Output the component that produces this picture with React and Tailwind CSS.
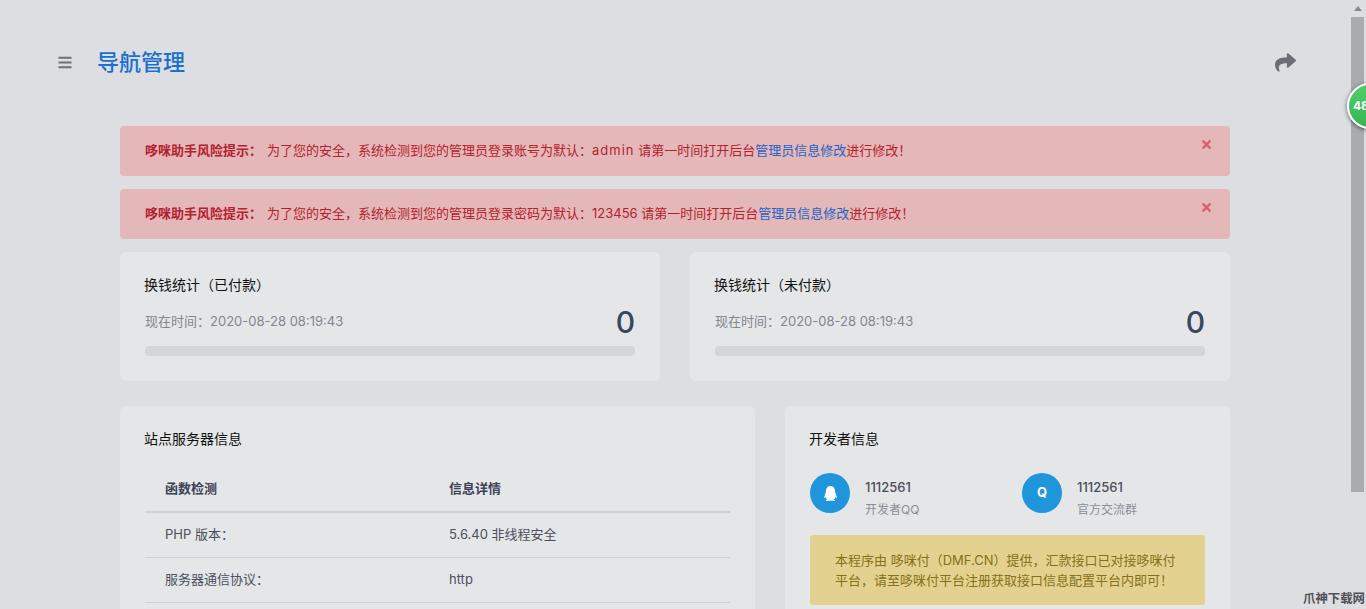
import React from "react";
import { FaBars, FaShare, FaTimes, FaQq } from "react-icons/fa";

const font = { fontFamily: '"Inter", "Noto Sans CJK SC", sans-serif' };

function Alert({ label, value, wide }) {
  return (
    <div className="relative h-[50px] rounded-[4px] bg-[#e4b8b9] pl-[25px] pr-[40px] flex items-center text-[13px] text-[#b5202f] whitespace-nowrap">
      <strong className="font-bold mr-[5px]">哆咪助手风险提示：</strong>
      <span>为了您的安全，系统检测到您的管理员登录{label}为默认：<span className={wide ? "tracking-[1px]" : ""}>{value}</span> 请第一时间打开后台<a className="text-[#1f62c4]">管理员信息修改</a>进行修改！</span>
      <FaTimes className="absolute right-[17px] top-[12px] w-[13px] h-[13px] text-[#d9606f]" />
    </div>
  );
}

function Stat({ title }) {
  return (
    <div className="flex-1 h-[129px] rounded-[6px] bg-[#e4e6e7] pt-[23px] px-[25px]">
      <h4 className="ml-[-1px] text-[14px] leading-[20px] text-[#111] font-normal">{title}</h4>
      <div className="mt-[7px] h-[40px] flex items-center justify-between">
        <span className="text-[13px] text-[#83868f]">现在时间：2020-08-28 08:19:43</span>
        <span className="text-[30px] leading-[40px] font-medium text-[#3a4560]">0</span>
      </div>
      <div className="mt-[4px] h-[10px] rounded-[4px] bg-[#d3d6d8]" />
    </div>
  );
}

function Row({ a, b }) {
  return (
    <div className="h-[45px] border-b border-[#cfd1d3] flex items-center text-[13px] text-[#4a4f5e]">
      <div className="w-[304px] pl-[20px]">{a}</div>
      <div>{b}</div>
    </div>
  );
}

function Contact({ icon, num, sub, className }) {
  return (
    <div className={"flex " + className}>
      <div className="w-[40px] h-[40px] rounded-full bg-[#1f95dc] flex items-center justify-center text-white shrink-0">{icon}</div>
      <div className="ml-[15px]">
        <div className="text-[13px] leading-[20px] mt-[4px] text-[#4b4e5c] font-medium">{num}</div>
        <div className="text-[12px] leading-[20px] mt-[3px] text-[#8b8e96]">{sub}</div>
      </div>
    </div>
  );
}

export default function App() {
  return (
    <div style={font} className="relative flex h-[609px] overflow-hidden bg-[#dcdee2]">
      <main className="w-[1351px] shrink-0">
        <header className="h-[126px] pl-[58px] pr-[54px] flex items-start">
          <FaBars className="mt-[55px] w-[14px] h-[15px] text-[#6e7078]" />
          <h1 className="ml-[25px] mt-[46px] text-[22px] leading-[32px] text-[#1a6fd0] font-medium">导航管理</h1>
          <FaShare className="ml-auto mt-[52px] w-[23px] h-[21px] text-[#6b6d78]" />
        </header>
        <div className="ml-[120px] w-[1110px] flex flex-col">
          <Alert label="账号" value="admin" wide />
          <div className="h-[13px]" />
          <Alert label="密码" value="123456" />
          <div className="mt-[13px] flex gap-[30px]">
            <Stat title="换钱统计（已付款）" />
            <Stat title="换钱统计（未付款）" />
          </div>
          <div className="mt-[25px] flex gap-[30px]">
            <section className="w-[635px] h-[300px] rounded-[6px] bg-[#e4e6e7] px-[25px] pt-[23px]">
              <h4 className="ml-[-1px] text-[14px] leading-[20px] text-[#111] font-normal">站点服务器信息</h4>
              <div className="mt-[17px] h-[45px] border-b-2 border-[#cfd1d3] box-content flex items-center text-[13px] font-bold text-[#3d4256]">
                <div className="w-[304px] pl-[20px]">函数检测</div>
                <div>信息详情</div>
              </div>
              <Row a="PHP 版本：" b="5.6.40 非线程安全" />
              <Row a="服务器通信协议：" b="http" />
            </section>
            <section className="w-[445px] h-[300px] rounded-[6px] bg-[#e4e6e7] px-[25px] pt-[23px]">
              <h4 className="ml-[-1px] text-[14px] leading-[20px] text-[#111] font-normal">开发者信息</h4>
              <div className="mt-[24px] flex">
                <Contact className="w-[212px]" icon={<FaQq className="w-[13px] h-[15px]" />} num="1112561" sub="开发者QQ" />
                <Contact icon={<span className="text-[13px] font-bold">Q</span>} num="1112561" sub="官方交流群" />
              </div>
              <div className="mt-[15px] h-[70px] rounded-[3px] bg-[#e3d28f] px-[25px] py-[15px] text-[13px] leading-[20px] text-[#85701c]">
                本程序由 哆咪付（DMF.CN）提供，汇款接口已对接哆咪付平台，请至哆咪付平台注册获取接口信息配置平台内即可！
              </div>
            </section>
          </div>
        </div>
      </main>
      <aside className="w-[15px] shrink-0 flex flex-col bg-[#dcdfe2]">
        <div className="h-[17px] flex items-center justify-center pr-[2px]">
          <div className="w-0 h-0 border-x-[4px] border-x-transparent border-b-[5px] border-b-[#85878a]" />
        </div>
        <div className="h-[475px] w-[13px] bg-[#a9abad]" />
      </aside>
      <div className="absolute left-[1347px] top-[83px] w-[46px] h-[46px] rounded-full bg-gradient-to-b from-[#4fd06a] to-[#36b552] border-2 border-white shadow-[0_1px_4px_rgba(0,0,0,0.6)] pl-[4px] flex items-center text-[12px] font-bold text-white">48</div>
      <div className="absolute left-[1303px] top-[591px] text-[12.4px] leading-[16px] font-bold text-[#4f5156] whitespace-nowrap">爪神下载网</div>
    </div>
  );
}
